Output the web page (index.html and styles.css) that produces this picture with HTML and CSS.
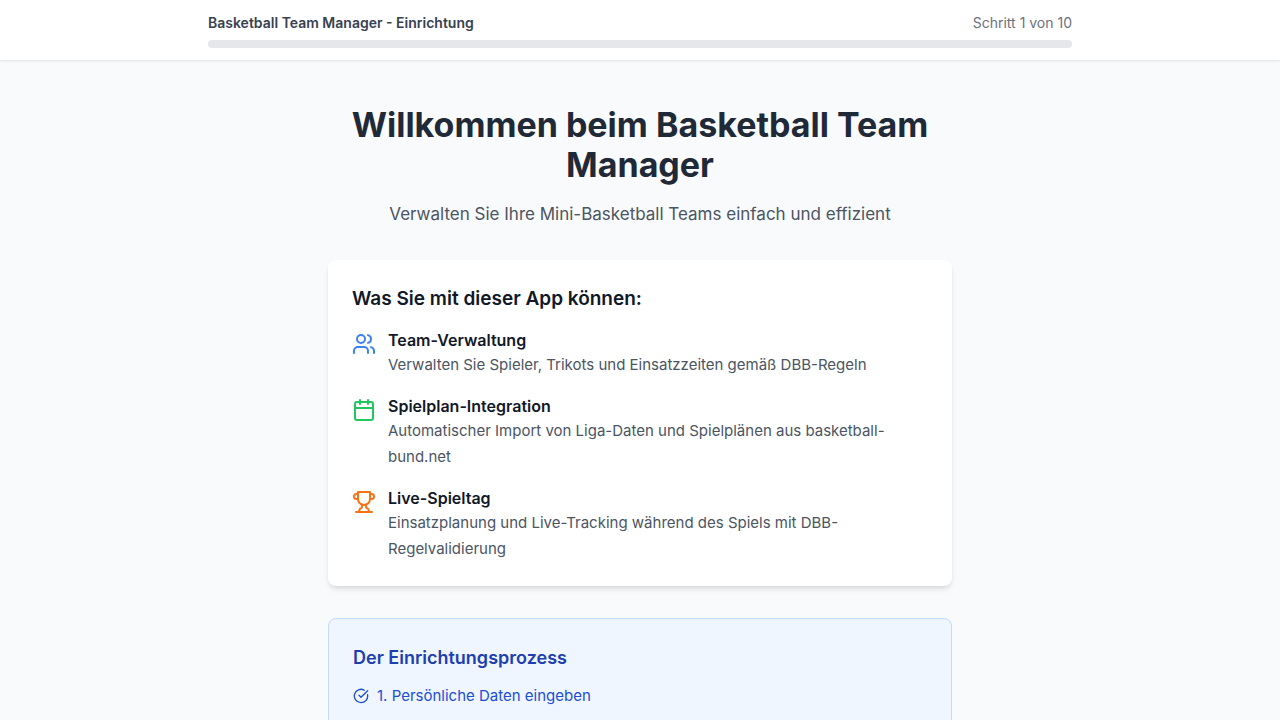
FILE: index.html
```html
<!DOCTYPE html>
<html lang="de">
<head>
<meta charset="utf-8">
<meta name="viewport" content="width=device-width, initial-scale=1">
<title>Basketball Team Manager - Einrichtung</title>
<link rel="stylesheet" href="styles.css">
</head>
<body>
<header class="topbar">
  <div class="topbar-inner">
    <div class="topbar-row">
      <span class="app-name">Basketball Team Manager - Einrichtung</span>
      <span class="step">Schritt 1 von 10</span>
    </div>
    <div class="progress" role="progressbar" aria-label="Fortschritt" aria-valuenow="0" aria-valuemin="0" aria-valuemax="100"></div>
  </div>
</header>
<main class="content">
  <div class="intro">
    <h1 class="title">Willkommen beim Basketball Team Manager</h1>
    <p class="subtitle">Verwalten Sie Ihre Mini-Basketball Teams einfach und effizient</p>
  </div>
  <section class="card">
    <h2 class="card-title">Was Sie mit dieser App können:</h2>
    <ul class="features">
      <li class="feature">
        <svg class="icon icon-blue" viewBox="0 0 24 24" aria-hidden="true"><path d="M16 21v-2a4 4 0 0 0-4-4H6a4 4 0 0 0-4 4v2"/><circle cx="9" cy="7" r="4"/><path d="M22 21v-2a4 4 0 0 0-3-3.87"/><path d="M16 3.13a4 4 0 0 1 0 7.75"/></svg>
        <div>
          <h3 class="feature-title">Team-Verwaltung</h3>
          <p class="feature-text">Verwalten Sie Spieler, Trikots und Einsatzzeiten gemäß DBB-Regeln</p>
        </div>
      </li>
      <li class="feature">
        <svg class="icon icon-green" viewBox="0 0 24 24" aria-hidden="true"><path d="M8 2v4"/><path d="M16 2v4"/><rect x="3" y="4" width="18" height="18" rx="2"/><path d="M3 10h18"/></svg>
        <div>
          <h3 class="feature-title">Spielplan-Integration</h3>
          <p class="feature-text">Automatischer Import von Liga-Daten und Spielplänen aus basketball-bund.net</p>
        </div>
      </li>
      <li class="feature">
        <svg class="icon icon-orange" viewBox="0 0 24 24" aria-hidden="true"><path d="M6 9H4.500a2.500 2.500 0 0 1 0-5H6"/><path d="M18 9h1.500a2.500 2.500 0 0 0 0-5H18"/><path d="M4 22h16"/><path d="M10 14.660V17c0 .550-.470.980-.970 1.210C7.850 18.750 7 20.240 7 22"/><path d="M14 14.660V17c0 .550.470.980.970 1.210C16.150 18.750 17 20.240 17 22"/><path d="M18 2H6v7a6 6 0 0 0 12 0V2Z"/></svg>
        <div>
          <h3 class="feature-title">Live-Spieltag</h3>
          <p class="feature-text">Einsatzplanung und Live-Tracking während des Spiels mit DBB-Regelvalidierung</p>
        </div>
      </li>
    </ul>
  </section>
  <section class="process">
    <h2 class="process-title">Der Einrichtungsprozess</h2>
    <ul class="steps">
      <li class="step-item">
        <svg class="icon-small" viewBox="0 0 24 24" aria-hidden="true"><path d="M21.801 10A10 10 0 1 1 17 3.335"/><path d="m9 11 3 3L22 4"/></svg>
        <span>1. Persönliche Daten eingeben</span>
      </li>
    </ul>
  </section>
</main>
</body>
</html>
```

FILE: styles.css
```css
* {
  box-sizing: border-box;
  margin: 0;
  padding: 0;
}

body {
  min-height: 100vh;
  background: #f9fafb;
  color: #111827;
  font-family: Inter, "Liberation Sans", sans-serif;
  font-size: 15px;
  line-height: 26px;
}

ul {
  list-style: none;
}

.topbar {
  background: #ffffff;
  box-shadow: 0 1px 3px rgba(0, 0, 0, 0.1);
  padding: 12px 16px;
}

.topbar-inner {
  max-width: 864px;
  margin: 0 auto;
}

.topbar-row {
  display: flex;
  justify-content: space-between;
  margin-bottom: 6px;
  font-size: 14px;
  line-height: 22px;
}

.app-name {
  color: #374151;
  font-weight: 600;
}

.step {
  color: #6b7280;
}

.progress {
  height: 8px;
  border-radius: 4px;
  background: #e5e7eb;
}

.content {
  max-width: 672px;
  margin: 0 auto;
  padding: 45px 24px 32px;
}

.intro {
  margin-bottom: 32px;
  text-align: center;
}

.title {
  margin-bottom: 15px;
  color: #1f2937;
  font-size: 34px;
  font-weight: 700;
  line-height: 40px;
}

.subtitle {
  color: #4b5563;
  font-size: 17px;
  line-height: 28px;
}

.card {
  margin-bottom: 32px;
  padding: 24px;
  border-radius: 8px;
  background: #ffffff;
  box-shadow: 0 4px 6px -1px rgba(0, 0, 0, 0.1), 0 2px 4px -2px rgba(0, 0, 0, 0.1);
}

.card-title {
  margin-bottom: 14px;
  font-size: 19px;
  font-weight: 600;
  line-height: 30px;
}

.features {
  display: flex;
  flex-direction: column;
  gap: 16px;
}

.feature {
  display: flex;
  gap: 12px;
}

.icon,
.icon-small {
  flex: none;
  fill: none;
  stroke: currentColor;
  stroke-width: 2;
  stroke-linecap: round;
  stroke-linejoin: round;
}

.icon {
  width: 24px;
  height: 24px;
  margin-top: 4px;
}

.icon-small {
  width: 16px;
  height: 16px;
}

.icon-blue {
  color: #3b82f6;
}

.icon-green {
  color: #22c55e;
}

.icon-orange {
  color: #f97316;
}

.feature-title {
  font-size: 16px;
  font-weight: 600;
  line-height: 24px;
}

.feature-text {
  color: #4b5563;
}

.process {
  padding: 24px;
  border: 1px solid #bfdbfe;
  border-radius: 8px;
  background: #eff6ff;
}

.process-title {
  margin-bottom: 10px;
  color: #1e40af;
  font-size: 18px;
  font-weight: 600;
  line-height: 30px;
}

.step-item {
  display: flex;
  align-items: center;
  gap: 8px;
  color: #1d4ed8;
}
```
